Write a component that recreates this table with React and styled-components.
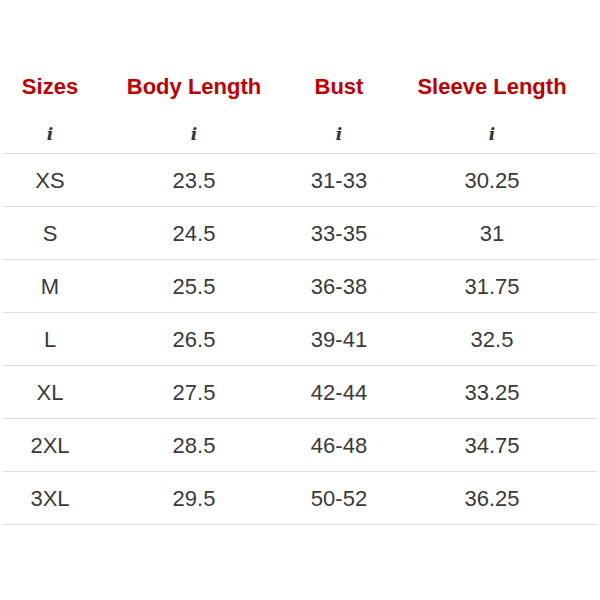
import React from "react";
import styled, { createGlobalStyle } from "styled-components";

const columns = [
  { title: "Sizes", width: 94 },
  { title: "Body Length", width: 194 },
  { title: "Bust", width: 96 },
  { title: "Sleeve Length", width: 210 },
];

const sizeData = [
  ["XS", "23.5", "31-33", "30.25"],
  ["S", "24.5", "33-35", "31"],
  ["M", "25.5", "36-38", "31.75"],
  ["L", "26.5", "39-41", "32.5"],
  ["XL", "27.5", "42-44", "33.25"],
  ["2XL", "28.5", "46-48", "34.75"],
  ["3XL", "29.5", "50-52", "36.25"],
];

const GlobalStyle = createGlobalStyle`
  body {
    margin: 0;
    background: #ffffff;
    font-family: "Liberation Sans", Arial, sans-serif;
  }
`;

const App = () => {
  return (
    <Page>
      <GlobalStyle />
      <SizeTable>
        <colgroup>
          {columns.map((col) => (
            <col key={col.title} style={{ width: col.width }} />
          ))}
        </colgroup>
        <thead>
          <HeadRow>
            {columns.map((col) => (
              <HeadCell key={col.title}>{col.title}</HeadCell>
            ))}
          </HeadRow>
          <UnitRow>
            {columns.map((col) => (
              <UnitCell key={col.title}>i</UnitCell>
            ))}
          </UnitRow>
        </thead>
        <tbody>
          {sizeData.map((row) => (
            <DataRow key={row[0]}>
              {row.map((value, i) => (
                <DataCell key={i}>{value}</DataCell>
              ))}
            </DataRow>
          ))}
        </tbody>
      </SizeTable>
    </Page>
  );
};

export default App;

const Page = styled.div`
  width: 600px;
  height: 600px;
  box-sizing: border-box;
  padding: 62px 3px 0;
`;

const SizeTable = styled.table`
  width: 594px;
  border-collapse: collapse;
  table-layout: fixed;
`;

const HeadRow = styled.tr`
  height: 50px;
`;

const HeadCell = styled.th`
  padding: 0;
  text-align: center;
  vertical-align: middle;
  font-size: 22px;
  font-weight: bold;
  color: #c00000;
`;

const UnitRow = styled.tr`
  height: 41px;
  border-bottom: 1px solid #dcdcdc;
`;

const UnitCell = styled.td`
  padding: 4px 0 0;
  text-align: center;
  vertical-align: middle;
  font-family: "DejaVu Serif", "Liberation Serif", serif;
  font-style: italic;
  font-weight: bold;
  font-size: 17px;
  color: #333333;
`;

const DataRow = styled.tr`
  height: 53.15px;
  border-bottom: 1px solid #dcdcdc;
`;

const DataCell = styled.td`
  padding: 2px 0 0;
  text-align: center;
  vertical-align: middle;
  font-size: 22px;
  color: #3a3a3a;
`;
